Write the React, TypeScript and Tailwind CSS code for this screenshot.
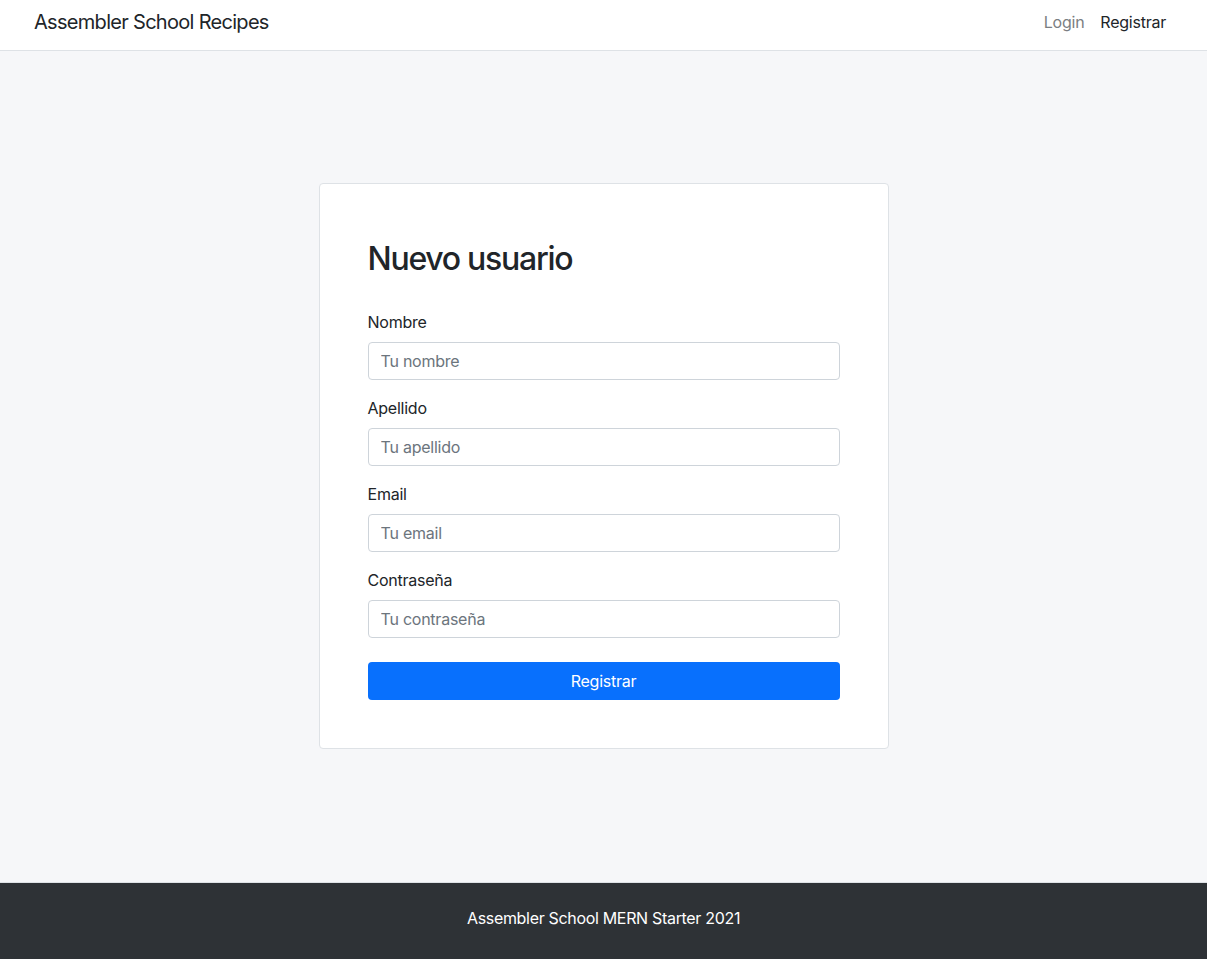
import React from 'react';

const fields = [
  { label: 'Nombre', placeholder: 'Tu nombre', type: 'text' },
  { label: 'Apellido', placeholder: 'Tu apellido', type: 'text' },
  { label: 'Email', placeholder: 'Tu email', type: 'email' },
  { label: 'Contraseña', placeholder: 'Tu contraseña', type: 'password' },
];

export default function App() {
  return (
    <div
      className="min-h-screen flex flex-col bg-[#f6f7f9] text-[#212529] tracking-[-0.015em]"
      style={{ fontFamily: 'Inter, "Noto Sans", sans-serif' }}
    >
      {/* Navbar */}
      <header className="h-[51px] bg-white border-b border-[#dee2e6] flex items-start justify-between pl-[34px] pr-[41px] pt-[7px]">
        <span className="text-[20px] leading-[30px] tracking-[-0.035em] text-[#212529]">
          Assembler School Recipes
        </span>
        <nav className="flex items-center gap-4 text-[16px] leading-[30px]">
          <a className="text-[#7b7e82]">Login</a>
          <a className="text-[#212529]">Registrar</a>
        </nav>
      </header>

      {/* Main */}
      <main className="flex-1 flex justify-center pt-[132px]">
        <div className="w-[570px] h-[566px] bg-white border border-[#dee2e6] rounded-[4px] px-12 pt-[56px] pb-12">
          <h2 className="text-[32px] font-medium leading-[1.2] tracking-[-0.04em] mb-8">Nuevo usuario</h2>
          <form className="flex flex-col">
            {fields.map((f) => (
              <div key={f.label} className="mb-4">
                <label className="block text-[16px] leading-6 mb-2">{f.label}</label>
                <input
                  type={f.type}
                  placeholder={f.placeholder}
                  className="w-full h-[38px] px-3 text-[16px] border border-[#ced4da] rounded-[4px] placeholder:text-[#6c757d] outline-none"
                />
              </div>
            ))}
            <button
              type="button"
              className="mt-2 h-[38px] w-full rounded-[4px] bg-[#0870fd] text-white text-[16px]"
            >
              Registrar
            </button>
          </form>
        </div>
      </main>

      {/* Footer */}
      <footer className="h-[77px] bg-[#2e3236] border-t border-[#dee2e6] flex justify-center pt-[23px] text-white text-[16px] leading-6 tracking-[-0.02em]">
        Assembler School MERN Starter 2021
      </footer>
    </div>
  );
}
